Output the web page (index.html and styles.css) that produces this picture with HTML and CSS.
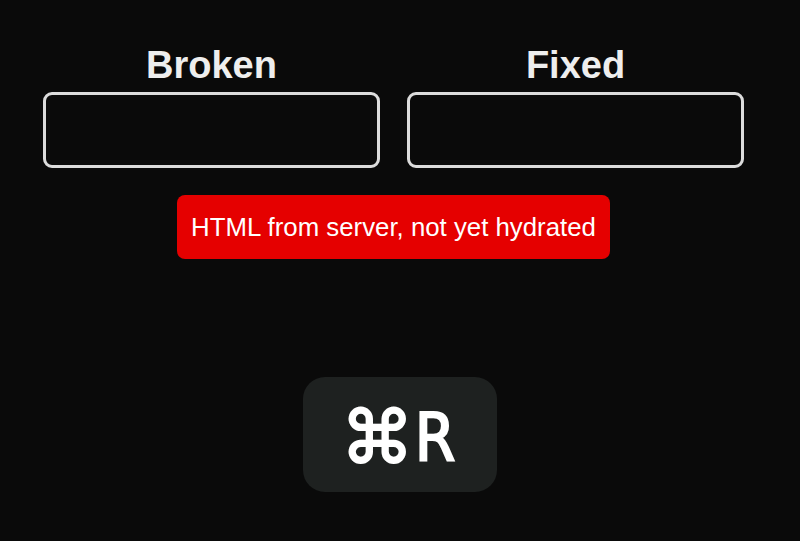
FILE: index.html
```html
<!DOCTYPE html>
<html>
<head>
<meta charset="utf-8">
<link rel="stylesheet" href="styles.css">
</head>
<body>
<main class="page">
  <section class="demo">
    <div class="columns">
      <div class="column">
        <h2 class="title">Broken</h2>
        <div class="field"></div>
      </div>
      <div class="column">
        <h2 class="title">Fixed</h2>
        <div class="field"></div>
      </div>
    </div>
    <div class="status">HTML from server, not yet hydrated</div>
  </section>
  <div class="keycap"><span class="cmd">⌘</span><span class="letter">R</span></div>
</main>
</body>
</html>
```
FILE: styles.css
```css
html, body {
  margin: 0;
  padding: 0;
  background: #0a0a0a;
}
.page {
  width: 800px;
  height: 541px;
  overflow: hidden;
  display: flex;
  flex-direction: column;
  align-items: center;
  font-family: "Liberation Sans", Arial, sans-serif;
}
.demo {
  align-self: flex-start;
  margin-left: 43px;
  margin-top: 43px;
  width: 701px;
  display: flex;
  flex-direction: column;
  align-items: center;
}
.columns {
  display: flex;
  gap: 27px;
  width: 100%;
}
.column {
  flex: 1;
  display: flex;
  flex-direction: column;
  align-items: center;
  gap: 5px;
}
.title {
  margin: 0;
  font-size: 38px;
  line-height: 44px;
  font-weight: 700;
  color: #eeeeee;
}
.field {
  box-sizing: border-box;
  width: 100%;
  height: 76px;
  border: 3px solid #dcdcdc;
  border-radius: 9px;
}
.status {
  margin-top: 27px;
  box-sizing: border-box;
  height: 64px;
  padding: 0 14px;
  background: #e50000;
  border-radius: 8px;
  color: #ffffff;
  font-size: 25.8px;
  line-height: 64px;
  white-space: nowrap;
}
.keycap {
  margin-top: 118px;
  width: 194px;
  height: 115px;
  border-radius: 22px;
  background: #1e2120;
  display: flex;
  align-items: center;
  justify-content: center;
  color: #ffffff;
  line-height: 1;
  padding-top: 6px;
  padding-right: 4px;
  box-sizing: border-box;
}
.cmd {
  font-family: "DejaVu Sans", sans-serif;
  font-weight: 400;
  font-size: 73px;
  -webkit-text-stroke: 2px #ffffff;
}
.letter {
  font-family: "DejaVu Sans Condensed", "DejaVu Sans", sans-serif;
  font-weight: 400;
  font-size: 65px;
  margin-left: 1px;
  -webkit-text-stroke: 2px #ffffff;
}
```
